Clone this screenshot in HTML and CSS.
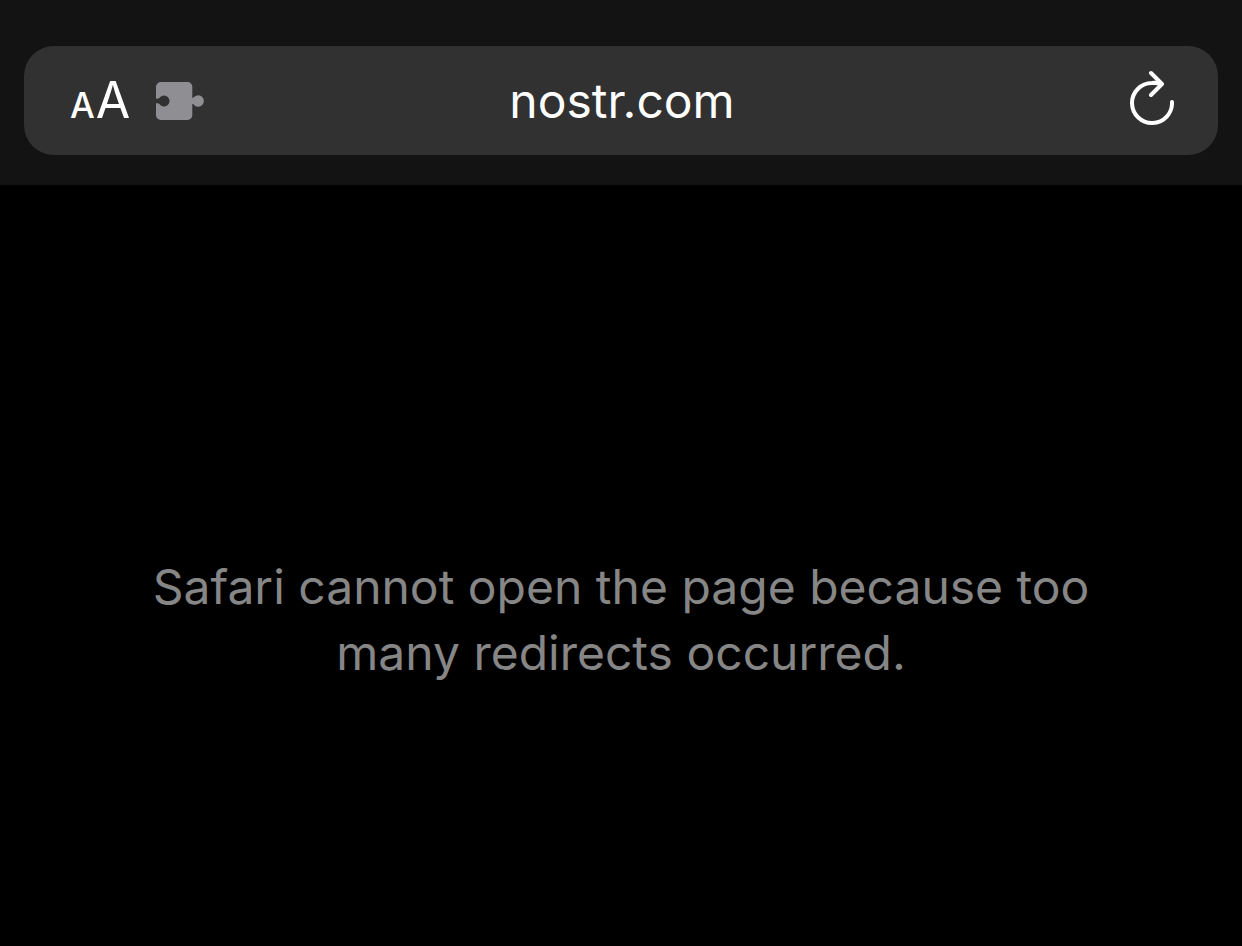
FILE: index.html
```html
<!DOCTYPE html>
<html lang="en">
<head>
<meta charset="utf-8">
<meta name="viewport" content="width=device-width, initial-scale=1">
<title>nostr.com</title>
<link rel="stylesheet" href="styles.css">
</head>
<body>
<header class="toolbar">
  <form class="address-bar">
    <div class="tools">
      <button class="text-size" type="button" aria-label="Text size"><span class="small-letter">A</span><span class="large-letter">A</span></button>
      <button class="icon-button" type="button" aria-label="Extensions">
        <svg class="puzzle" width="48" height="40" viewBox="0 0 48 40" aria-hidden="true">
          <path fill="currentColor" d="M5 1H31.500A4.800 4.800 0 0 1 36.300 6V17C37.300 17 37.800 16.400 38.300 15.800A5.700 5.700 0 1 1 38.300 24.200C37.800 23.600 37.300 23 36.300 23V34A4.800 4.800 0 0 1 31.500 39H5A4.800 4.800 0 0 1 0 34V22.500C2 22 3 22.500 4.300 24A5.500 5.500 0 1 0 4.300 16C3 17.500 2 18 0 17.500V6A4.800 4.800 0 0 1 5 1Z"/>
        </svg>
      </button>
    </div>
    <input class="address" type="text" aria-label="Address" value="nostr.com">
    <button class="icon-button reload" type="button" aria-label="Reload">
      <svg width="46" height="62" viewBox="0 0 46 62" fill="none" stroke="currentColor" stroke-width="4" stroke-linecap="round" stroke-linejoin="round" aria-hidden="true">
        <path d="M44 32A20 20 0 1 1 24 13Q29 12.500 34 14M23 3L34 14L23 25"/>
      </svg>
    </button>
  </form>
</header>
<main class="page">
  <p class="message">Safari cannot open the page because too many redirects occurred.</p>
</main>
</body>
</html>
```
FILE: styles.css
```css
* {
  box-sizing: border-box;
}

body {
  margin: 0;
  min-height: 100vh;
  display: flex;
  flex-direction: column;
  background: #000;
  color: #fff;
  font-family: Inter, "Liberation Sans", sans-serif;
}

button,
input {
  margin: 0;
  padding: 0;
  border: 0;
  background: none;
  color: inherit;
  font: inherit;
}

.toolbar {
  padding: 46px 24px 30px;
  background: #131313;
}

.address-bar {
  display: grid;
  grid-template-columns: 1fr 2fr 1fr;
  align-items: center;
  padding: 22px 44px 22px 46px;
  border-radius: 30px;
  background: #313131;
}

.tools {
  display: flex;
  align-items: center;
  gap: 26px;
}

.text-size {
  display: flex;
  align-items: baseline;
  gap: 1px;
  padding-top: 4px;
}

.small-letter,
.large-letter {
  line-height: 52px;
}

.small-letter {
  font-size: 35px;
  font-weight: 500;
}

.large-letter {
  font-size: 50px;
}

.icon-button {
  display: flex;
}

.puzzle {
  color: #8e8e93;
}

.address {
  width: 100%;
  height: 65px;
  font-size: 48px;
  text-align: center;
}

.reload {
  justify-self: end;
}

.page {
  flex: 1;
  display: flex;
  flex-direction: column;
  justify-content: center;
  align-items: center;
  padding: 108px 120px 0;
}

.message {
  max-width: 1000px;
  margin: 0;
  color: #868686;
  font-size: 48px;
  line-height: 66px;
  text-align: center;
}
```
